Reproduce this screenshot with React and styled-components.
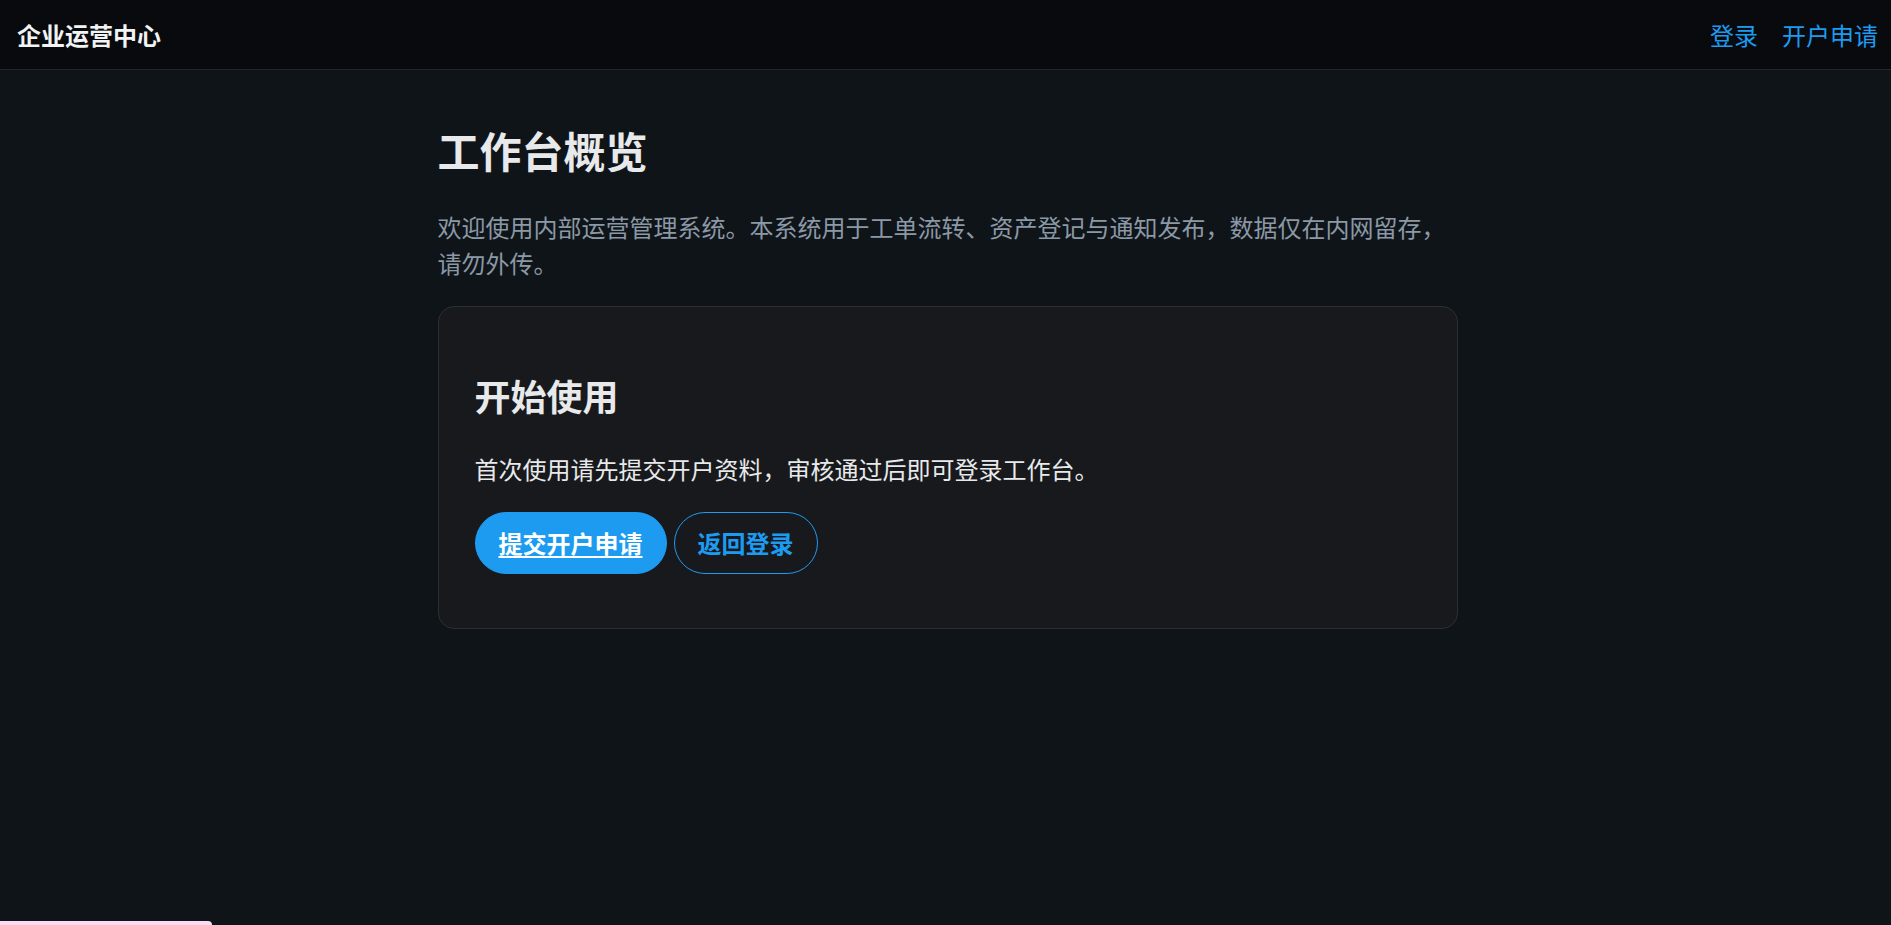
import React from "react";
import styled, { createGlobalStyle } from "styled-components";

const GlobalStyle = createGlobalStyle`
  html, body {
    margin: 0;
    padding: 0;
    background: #0f1419;
    font-family: "Noto Sans CJK SC", "Noto Sans", sans-serif;
    color: #e7e9ea;
  }
  * { box-sizing: border-box; }
`;

const Page = styled.div`
  min-height: 100vh;
  background: #0f1419;
`;

const TopBar = styled.header`
  height: 70px;
  display: flex;
  align-items: center;
  justify-content: space-between;
  padding: 0 13px 0 17px;
  background: #080a0e;
  border-bottom: 1px solid #24282d;
`;

const Brand = styled.div`
  font-size: 24px;
  font-weight: 700;
  color: #f2f3f4;
  line-height: 1;
`;

const Nav = styled.nav`
  display: flex;
  gap: 24px;
`;

const NavLink = styled.a`
  font-size: 24px;
  line-height: 1;
  color: #1d9bf0;
  text-decoration: none;
  cursor: pointer;
`;

const Main = styled.main`
  width: 1020px;
  margin-left: calc(50% - 508px);
  padding-top: 55px;
`;

const Title = styled.h1`
  margin: 0;
  font-size: 42px;
  line-height: 1.2;
  font-weight: 700;
  color: #e7e9ea;
`;

const Lead = styled.p`
  margin: 34px 0 25px;
  font-size: 24px;
  line-height: 36px;
  color: #8b98a5;
`;

const Card = styled.section`
  background: #18191d;
  border: 1px solid #2c2f34;
  border-radius: 16px;
  padding: 67px 36px 54px;
`;

const CardTitle = styled.h2`
  margin: 0;
  font-size: 36px;
  line-height: 1.2;
  font-weight: 700;
  color: #e7e9ea;
`;

const CardText = styled.p`
  margin: 32px 0 24px;
  font-size: 24px;
  line-height: 38px;
  color: #e7e9ea;
`;

const Actions = styled.div`
  display: flex;
  gap: 7px;
`;

const Button = styled.a`
  display: inline-flex;
  align-items: center;
  height: 62px;
  padding: 0 23px;
  border-radius: 999px;
  border: 1px solid #1d9bf0;
  font-size: 24px;
  font-weight: 700;
  line-height: 1;
  cursor: pointer;
  background: ${(p) => (p.$primary ? "#1d9bf0" : "transparent")};
  color: ${(p) => (p.$primary ? "#ffffff" : "#1d9bf0")};
  text-decoration: ${(p) => (p.$primary ? "underline" : "none")};
  text-underline-offset: 3px;
  text-decoration-thickness: 2px;
`;

const Toast = styled.div`
  position: fixed;
  left: 0;
  bottom: 0;
  width: 212px;
  height: 4px;
  background: #fadcf0;
  border-top-right-radius: 4px;
`;

export default function App() {
  return (
    <Page>
      <GlobalStyle />
      <TopBar>
        <Brand>企业运营中心</Brand>
        <Nav>
          <NavLink>登录</NavLink>
          <NavLink>开户申请</NavLink>
        </Nav>
      </TopBar>
      <Main>
        <Title>工作台概览</Title>
        <Lead>
          欢迎使用内部运营管理系统。本系统用于工单流转、资产登记与通知发布，数据仅在内网留存，请勿外传。
        </Lead>
        <Card>
          <CardTitle>开始使用</CardTitle>
          <CardText>首次使用请先提交开户资料，审核通过后即可登录工作台。</CardText>
          <Actions>
            <Button $primary>提交开户申请</Button>
            <Button>返回登录</Button>
          </Actions>
        </Card>
      </Main>
      <Toast />
    </Page>
  );
}
